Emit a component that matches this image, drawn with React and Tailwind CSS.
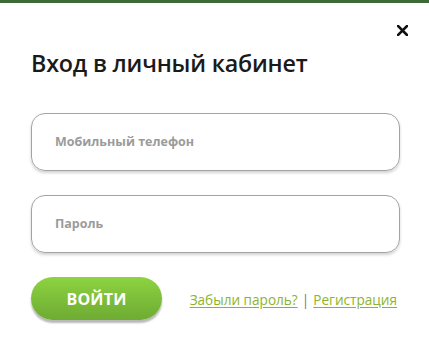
export default function App() {
  return (
    <div className="w-[429px] h-[363px] bg-white overflow-hidden" style={{ fontFamily: '"Open Sans", "Noto Sans", sans-serif' }}>
      <div className="h-[3px] bg-[#3e6a37]" />
      <div className="flex justify-end pt-[21px] pr-[21px]">
        <button className="w-[12px] h-[12px] flex items-center justify-center">
          <svg width="11" height="11" viewBox="0 0 11 11">
            <path d="M1 1 L10 10 M10 1 L1 10" stroke="#111" strokeWidth="2.6" strokeLinecap="square" />
          </svg>
        </button>
      </div>
      <div className="pl-[31px] pr-[29px]">
        <h1 className="mt-[12px] text-[23.3px] leading-[30px] font-semibold text-[#1a1a1a] tracking-[-0.2px]">Вход в личный кабинет</h1>
        <div className="mt-[35px] flex flex-col gap-[24px]">
          <div className="h-[58px] rounded-[14px] border border-[#a3a3a3] shadow-[0_2px_3px_rgba(0,0,0,0.18)] flex items-center pl-[23px]">
            <span className="text-[12.5px] font-bold text-[#9b9b9b]">Мобильный телефон</span>
          </div>
          <div className="h-[58px] rounded-[14px] border border-[#a3a3a3] shadow-[0_2px_3px_rgba(0,0,0,0.18)] flex items-center pl-[23px]">
            <span className="text-[12.5px] font-bold text-[#9b9b9b]">Пароль</span>
          </div>
        </div>
        <div className="mt-[24px] flex items-center justify-between">
          <button className="w-[131px] h-[43px] rounded-full bg-gradient-to-b from-[#8dd341] to-[#6eab33] shadow-[0_3px_2px_rgba(0,0,0,0.28)] text-white font-bold text-[16px] tracking-[0.2px]">ВОЙТИ</button>
          <div className="mr-[3px] mt-[3px] text-[13.6px] text-[#8cb42b] flex items-center gap-[4px]">
            <a className="underline underline-offset-2">Забыли пароль?</a>
            <span className="text-[#777]">|</span>
            <a className="underline underline-offset-2">Регистрация</a>
          </div>
        </div>
      </div>
    </div>
  );
}
